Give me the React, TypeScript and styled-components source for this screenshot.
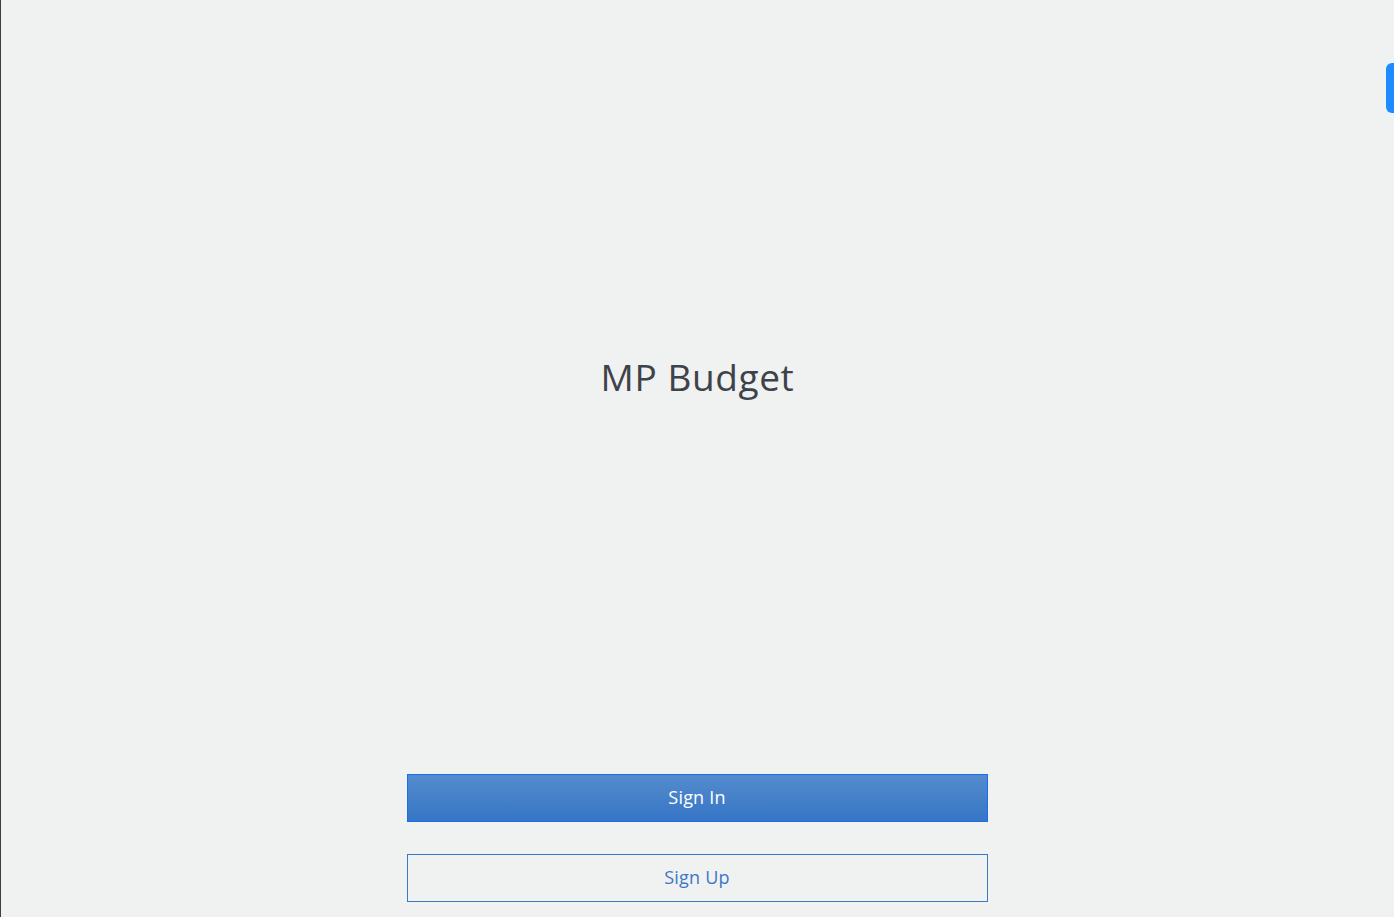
import React from "react";
import styled, { createGlobalStyle } from "styled-components";

const Global = createGlobalStyle`
  html, body { margin: 0; padding: 0; background: #f0f1f1; }
  body { font-family: "Open Sans", "Liberation Sans", sans-serif; }
  * { box-sizing: border-box; }
`;

const Page = styled.div`
  position: relative;
  height: 917px;
  border-left: 1px solid #3c3f41;
  background: #f0f1f1;
  display: flex;
  flex-direction: column;
  overflow: hidden;
`;

const TitleArea = styled.div`
  flex: 1;
  display: flex;
  align-items: center;
  justify-content: center;
  padding-bottom: 22px;
`;

const Title = styled.h1`
  margin: 0;
  font-family: "Open Sans", "Liberation Sans", sans-serif;
  font-weight: 400;
  font-size: 37px;
  letter-spacing: 0.6px;
  color: #3e4249;
`;

const Actions = styled.div`
  display: flex;
  flex-direction: column;
  align-items: center;
  gap: 32px;
  padding-bottom: 15px;
  padding-right: 1px;
`;

const Button = styled.button<{ $primary?: boolean }>`
  width: 581px;
  height: 48px;
  padding: 0 0 2px;
  font-family: "Open Sans", "Liberation Sans", sans-serif;
  font-size: 18px;
  letter-spacing: 0.2px;
  cursor: pointer;
  border: 1px solid ${(p) => (p.$primary ? "#1b6cf0" : "#3a78c4")};
  background: ${(p) =>
    p.$primary ? "linear-gradient(#558bcd, #3676c6)" : "transparent"};
  color: ${(p) => (p.$primary ? "#ffffff" : "#3b78c8")};
`;

const SideTab = styled.div`
  position: absolute;
  right: 0;
  top: 63px;
  width: 8px;
  height: 50px;
  border-radius: 6px 0 0 6px;
  background: #1a8cff;
`;

export default function App() {
  return (
    <>
      <Global />
      <Page>
        <TitleArea>
          <Title>MP Budget</Title>
        </TitleArea>
        <Actions>
          <Button $primary>Sign In</Button>
          <Button>Sign Up</Button>
        </Actions>
        <SideTab />
      </Page>
    </>
  );
}
